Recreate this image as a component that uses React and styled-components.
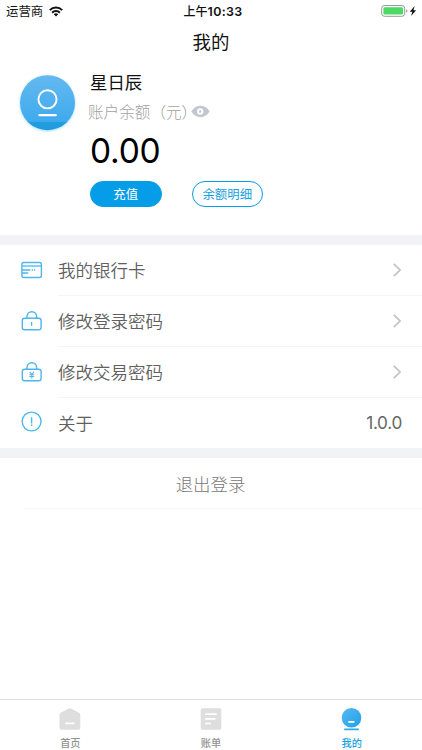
import React from "react";
import styled, { createGlobalStyle, css } from "styled-components";

const GlobalStyle = createGlobalStyle`
  * {
    box-sizing: border-box;
  }

  body {
    margin: 0;
    background: #fff;
    font-family: "Noto Sans CJK SC", sans-serif;
    font-weight: 300;
  }

  svg {
    display: block;
    flex-shrink: 0;
  }
`;

const Screen = styled.div`
  display: flex;
  flex-direction: column;
  width: 422px;
  height: 750px;
  overflow: hidden;
  background: #fff;
`;

const StatusBar = styled.div`
  display: grid;
  grid-template-columns: 1fr auto 1fr;
  align-items: center;
  height: 22px;
  padding: 0 4px 0 6px;
  color: #111;
`;

const Carrier = styled.div`
  display: flex;
  align-items: center;
  gap: 6px;
  font-size: 12.4px;
  font-weight: 400;
  line-height: 20px;
`;

const Clock = styled.div`
  padding-left: 2px;
  font-size: 12px;
  font-weight: 500;
  line-height: 20px;

  span {
    font-family: Inter, sans-serif;
    font-size: 12.4px;
    font-weight: 600;
    letter-spacing: 0.35px;
  }
`;

const Power = styled.div`
  display: flex;
  justify-content: flex-end;
`;

const Title = styled.h1`
  height: 40px;
  margin: 0;
  font-size: 18.4px;
  font-weight: 400;
  line-height: 39px;
  text-align: center;
  color: #111;
`;

const Profile = styled.section`
  display: flex;
  height: 173px;
  padding: 8px 0 0 15px;
`;

const Details = styled.div`
  padding-left: 10px;
`;

const Name = styled.div`
  font-size: 17.4px;
  font-weight: 400;
  line-height: 24px;
  color: #111;
`;

const BalanceLabel = styled.div`
  display: flex;
  align-items: center;
  height: 24px;
  margin: 5px 0 0 -2px;
  font-size: 15.6px;
  color: #a0a0a0;

  svg {
    margin-left: -6px;
  }
`;

const Balance = styled.div`
  height: 40px;
  margin-top: 8px;
  font-family: Inter, sans-serif;
  font-size: 33.5px;
  font-weight: 400;
  line-height: 41px;
  letter-spacing: -0.2px;
  color: #000;
`;

const Actions = styled.div`
  display: flex;
  gap: 30px;
  margin-top: 10px;
`;

const PillButton = styled.button`
  width: 71.5px;
  height: 26px;
  padding: 0;
  border: 1px solid #059de8;
  border-radius: 13px;
  background: ${(props) => (props.$filled ? "#059de8" : "#fff")};
  color: ${(props) => (props.$filled ? "#fff" : "#159fe2")};
  font-family: inherit;
  font-size: 12.4px;
  font-weight: 400;
  line-height: 23px;
`;

const Divider = styled.div`
  height: 10px;
  background: #f2f3f5;
`;

const Menu = styled.div`
  height: 203px;
`;

const MenuRow = styled.div`
  display: flex;
  align-items: center;
  height: ${(props) => (props.$last ? "50px" : "51px")};
  padding-left: 20px;
`;

const MenuBody = styled.div`
  display: flex;
  flex: 1;
  align-items: center;
  justify-content: space-between;
  height: 100%;
  margin-left: 14px;
  padding: 0 20px 0 0;
  ${(props) =>
    props.$line &&
    css`
      border-bottom: 1px solid #f5f5f5;
    `}
`;

const MenuLabel = styled.span`
  font-size: 17.5px;
  font-weight: 350;
  line-height: 26px;
  color: #606060;
`;

const Version = styled(MenuLabel)`
  font-family: Inter, sans-serif;
  font-size: 17.2px;
  font-weight: 400;
  letter-spacing: -0.3px;
  color: #666;
`;

const Logout = styled.div`
  height: 51px;
  margin-left: 24px;
  padding-right: 25px;
  border-bottom: 1px solid #f7f7f7;
  font-size: 17.4px;
  line-height: 51px;
  text-align: center;
  color: #777;
`;

const TabBar = styled.nav`
  display: grid;
  grid-template-columns: repeat(3, 1fr);
  height: 51px;
  margin-top: auto;
  border-top: 1px solid #dedede;
`;

const Tab = styled.div`
  display: flex;
  flex-direction: column;
  align-items: center;
  padding-top: 7px;
  font-size: 10.2px;
  font-weight: 500;
  line-height: 16px;
  color: ${(props) => (props.$active ? "#1b9fe0" : "#929292")};

  svg {
    margin-bottom: 4px;
  }
`;

const WifiIcon = () => (
  <svg width="14" height="11" viewBox="0 0 14 11" fill="none" stroke="#111" strokeWidth="2">
    <path d="M.8 4.1a9 9 0 0 1 12.4 0" />
    <path d="M3.1 6.7a5.6 5.6 0 0 1 7.8 0" />
    <path d="M7 10.5 4.8 8.3a3.2 3.2 0 0 1 4.4 0Z" fill="#111" stroke="none" />
  </svg>
);

const BatteryIcon = () => (
  <svg width="37" height="14" viewBox="0 0 37 14">
    <rect x=".7" y="1.5" width="23" height="10.8" rx="2.8" fill="#fff" stroke="#999" />
    <rect x="2.4" y="3.2" width="19.6" height="7.4" rx="1.4" fill="#4cd964" />
    <path d="M25.2 5.3q1.3.5 1.3 1.7t-1.3 1.7Z" fill="#999" />
    <path d="m33.7 2-5 5.7h2.6L30.1 12l5-5.8h-2.7Z" fill="#111" />
  </svg>
);

const AvatarIcon = () => (
  <svg width="65" height="65" viewBox="0 0 65 65">
    <defs>
      <linearGradient id="avatar" x1="0" y1="0" x2="0" y2="1">
        <stop stopColor="#64b9f0" />
        <stop offset=".84" stopColor="#3faaed" />
        <stop offset=".86" stopColor="#239ddd" />
        <stop offset="1" stopColor="#1b9ce0" />
      </linearGradient>
      <filter id="glow" x="-20%" y="-20%" width="140%" height="140%">
        <feGaussianBlur stdDeviation="1.7" />
      </filter>
    </defs>
    <circle cx="32.5" cy="33.5" r="27.5" fill="#a5dcfb" filter="url(#glow)" />
    <circle cx="32.5" cy="32.7" r="27.5" fill="url(#avatar)" />
    <circle cx="32.5" cy="29.3" r="9.1" fill="none" stroke="#fff" strokeWidth="1.9" />
    <path d="M24.3 45.2h16.5" stroke="#fff" strokeWidth="2.2" strokeLinecap="round" />
  </svg>
);

const EyeIcon = () => (
  <svg width="19" height="13" viewBox="0 0 19 13">
    <path d="M.3 6.5C3 2.5 6 .8 9.5.8s6.5 1.7 9.2 5.7c-2.7 4-5.7 5.7-9.2 5.7S3 10.5.3 6.5Z" fill="#c4c5cf" />
    <circle cx="9.2" cy="6.5" r="3.2" fill="#fff" />
    <circle cx="9.2" cy="6.5" r="1.2" fill="#c4c5cf" />
  </svg>
);

const lineIcon = {
  width: 24,
  height: 24,
  viewBox: "0 0 24 24",
  fill: "none",
  stroke: "#4db6ee",
  strokeWidth: 1.4,
};

const CardIcon = () => (
  <svg {...lineIcon}>
    <rect x="1.9" y="3.5" width="19.5" height="15" rx="2" />
    <path d="M2 7h19.4" strokeWidth="1.3" />
    <path d="M2 11h8.300M11.700 11h1.300M14 11h1.300M2 14h6.300" strokeWidth="1.400" />
  </svg>
);

const LockIcon = ({ yen }) => (
  <svg {...lineIcon}>
    <rect x="2.300" y="8.300" width="18.800" height="11.500" rx="2.200" />
    <path d="M7 8.300V6.500a4.800 4.800 0 0 1 9.600 0v1.800" />
    {yen ? (
      <path d="m9.600 10.800 2.200 2.700 2.200-2.700M11.800 13.500v3.900M9.400 13.700h4.800M9.400 15.500h4.800" strokeWidth="1.100" />
    ) : (
      <path d="M11.600 12v3.800" strokeWidth="1.300" />
    )}
  </svg>
);

const AboutIcon = () => (
  <svg {...lineIcon}>
    <circle cx="11.600" cy="10.500" r="9.400" />
    <path d="M11.600 6.300v6.200M11.600 13.600v1.300" strokeWidth="1.400" />
  </svg>
);

const Chevron = () => (
  <svg width="10" height="14" viewBox="0 0 10 14" fill="none" stroke="#c3c3c3" strokeWidth="1.700">
    <path d="m1.800.9 6.300 6.100-6.300 6.100" />
  </svg>
);

const HomeTabIcon = () => (
  <svg width="22" height="24" viewBox="0 0 22 24">
    <path d="M9.600 1.600q1.200-.7 2.400 0l8 4.200q1.300.7 1.300 2v13q0 1.900-1.900 1.900H2.400Q.5 22.700.5 20.800v-13q0-1.300 1.300-2Z" fill="#dedede" />
    <path d="M7 16.400h7.700" stroke="#fff" strokeWidth="1.800" strokeLinecap="round" />
  </svg>
);

const BillTabIcon = () => (
  <svg width="22" height="24" viewBox="0 0 22 24">
    <rect x=".7" y="1.200" width="20.600" height="21.600" rx="1.800" fill="#dedede" />
    <path d="M5.800 7.200H16M5.800 11.800h9M5.800 16.500h4.500" stroke="#fff" strokeWidth="1.700" strokeLinecap="round" />
  </svg>
);

const MineTabIcon = () => (
  <svg width="22" height="24" viewBox="0 0 22 24">
    <defs>
      <linearGradient id="mine" x1="0" y1="0" x2="1" y2="1">
        <stop stopColor="#56baf3" />
        <stop offset="1" stopColor="#229fe6" />
      </linearGradient>
    </defs>
    <circle cx="10.500" cy="10.800" r="9.800" fill="url(#mine)" />
    <path d="M8 14.900h4.800" stroke="#fff" strokeWidth="1.700" strokeLinecap="round" />
    <path d="M3.800 22.400h13.400" stroke="#30a9e9" strokeWidth="1.600" strokeLinecap="round" />
  </svg>
);

const menuItems = [
  { label: "我的银行卡", icon: <CardIcon /> },
  { label: "修改登录密码", icon: <LockIcon /> },
  { label: "修改交易密码", icon: <LockIcon yen /> },
  { label: "关于", icon: <AboutIcon />, value: "1.0.0" },
];

const tabs = [
  { label: "首页", icon: <HomeTabIcon /> },
  { label: "账单", icon: <BillTabIcon /> },
  { label: "我的", icon: <MineTabIcon />, active: true },
];

export default function App() {
  return (
    <>
      <GlobalStyle />
      <Screen>
        <StatusBar>
          <Carrier>
            运营商
            <WifiIcon />
          </Carrier>
          <Clock>
            上午<span>10:33</span>
          </Clock>
          <Power>
            <BatteryIcon />
          </Power>
        </StatusBar>
        <Title>我的</Title>

        <Profile>
          <AvatarIcon />
          <Details>
            <Name>星日辰</Name>
            <BalanceLabel>
              账户余额（元）
              <EyeIcon />
            </BalanceLabel>
            <Balance>0.00</Balance>
            <Actions>
              <PillButton $filled>充值</PillButton>
              <PillButton>余额明细</PillButton>
            </Actions>
          </Details>
        </Profile>

        <Divider />
        <Menu>
          {menuItems.map((item) => (
            <MenuRow key={item.label} $last={Boolean(item.value)}>
              {item.icon}
              <MenuBody $line={!item.value}>
                <MenuLabel>{item.label}</MenuLabel>
                {item.value ? <Version>{item.value}</Version> : <Chevron />}
              </MenuBody>
            </MenuRow>
          ))}
        </Menu>
        <Divider />
        <Logout>退出登录</Logout>

        <TabBar>
          {tabs.map((tab) => (
            <Tab key={tab.label} $active={tab.active}>
              {tab.icon}
              {tab.label}
            </Tab>
          ))}
        </TabBar>
      </Screen>
    </>
  );
}
